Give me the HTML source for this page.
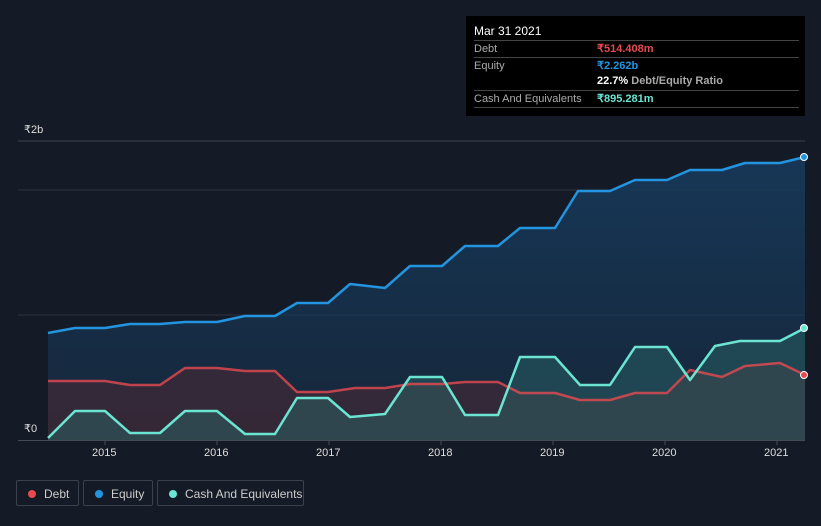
<!DOCTYPE html>
<html><head><meta charset="utf-8"><style>
body{margin:0;width:821px;height:526px;background:#151b26;font-family:"Liberation Sans",sans-serif;overflow:hidden;position:relative}
.tip{position:absolute;left:466px;top:16px;width:339px;height:100px;background:#000;color:#fff;font-size:11px}
.tip .r{position:absolute;left:8px;right:6px;border-top:1px solid #444;height:16px;line-height:16px;color:#aaa}
.tip .v{position:absolute;left:123px;font-weight:bold}
.leg{position:absolute;top:480px;height:26px;border:1px solid #3a414d;border-radius:2px;color:#ccc;font-size:12px;line-height:26px;box-sizing:border-box}
.leg i{position:absolute;left:11px;top:9px;width:8px;height:8px;border-radius:50%}
.leg span{position:absolute;left:27px}
.ax{position:absolute;color:#ddd;font-size:11px}
</style></head><body>
<svg width="821" height="526" style="position:absolute;left:0;top:0">
<defs>
<linearGradient id="ge" x1="0" y1="0" x2="0" y2="1"><stop offset="0" stop-color="#173a5c" stop-opacity=".9"/><stop offset="1" stop-color="#173a5c" stop-opacity=".35"/></linearGradient>
</defs>
<line x1="18" y1="141" x2="805" y2="141" stroke="#3a414d"/>
<line x1="18" y1="190" x2="805" y2="190" stroke="#2a313d"/>
<line x1="18" y1="315" x2="805" y2="315" stroke="#2a313d"/>
<polygon fill="url(#ge)" points="48,333 75,328 105,328 130,324 160,324 185,322 217,322 245,316 275,316 297,303 328,303 350,284 385,288 410,266 442,266 465,246 498,246 520,228 555,228 578,191 610,191 635,180 667,180 690,170 722,170 745,163 780,163 805,157 805,440 48,440"/>
<polygon fill="#4a2a36" fill-opacity=".6" points="48,381 105,381 130,385 160,385 185,368 217,368 245,371 275,371 297,392 328,392 355,388 385,388 410,384 442,384 465,382 498,382 520,393 555,393 580,400 610,400 635,393 667,393 690,370 722,377 745,366 780,363 805,375 805,440 48,440"/>
<polygon fill="#2b6a6a" fill-opacity=".45" points="48,438 75,411 105,411 130,433 160,433 185,411 217,411 245,434 275,434 297,398 328,398 350,417 385,414 410,377 442,377 465,415 498,415 520,357 555,357 580,385 610,385 635,347 667,347 690,380 715,346 740,341 780,341 805,328 805,440 48,440"/>
<g fill="none" stroke-width="2.5" stroke-linejoin="round">
<polyline stroke="#2394df" points="48,333 75,328 105,328 130,324 160,324 185,322 217,322 245,316 275,316 297,303 328,303 350,284 385,288 410,266 442,266 465,246 498,246 520,228 555,228 578,191 610,191 635,180 667,180 690,170 722,170 745,163 780,163 805,157"/>
<polyline stroke="#e64a50" stroke-opacity=".8" points="48,381 105,381 130,385 160,385 185,368 217,368 245,371 275,371 297,392 328,392 355,388 385,388 410,384 442,384 465,382 498,382 520,393 555,393 580,400 610,400 635,393 667,393 690,370 722,377 745,366 780,363 805,375"/>
<polyline stroke="#6ce4d2" points="48,438 75,411 105,411 130,433 160,433 185,411 217,411 245,434 275,434 297,398 328,398 350,417 385,414 410,377 442,377 465,415 498,415 520,357 555,357 580,385 610,385 635,347 667,347 690,380 715,346 740,341 780,341 805,328"/>
</g>
<line x1="18" y1="440.5" x2="805" y2="440.5" stroke="#444b56"/>
<g stroke="#444b56"><line x1="105" y1="440" x2="105" y2="445"/><line x1="217" y1="440" x2="217" y2="445"/><line x1="329" y1="440" x2="329" y2="445"/><line x1="441" y1="440" x2="441" y2="445"/><line x1="553" y1="440" x2="553" y2="445"/><line x1="665" y1="440" x2="665" y2="445"/><line x1="777" y1="440" x2="777" y2="445"/></g>
<circle cx="804" cy="157" r="3.5" fill="#2394df" stroke="#fff"/>
<circle cx="804" cy="375" r="3.5" fill="#e64a50" stroke="#fff"/>
<circle cx="804" cy="328" r="3.5" fill="#6ce4d2" stroke="#fff"/>
</svg>
<div class="ax" style="left:24px;top:123px">₹2b</div>
<div class="ax" style="left:24px;top:422px">₹0</div>
<div class="ax" style="left:92px;top:447px">2015</div>
<div class="ax" style="left:204px;top:447px">2016</div>
<div class="ax" style="left:316px;top:447px">2017</div>
<div class="ax" style="left:428px;top:447px">2018</div>
<div class="ax" style="left:540px;top:447px">2019</div>
<div class="ax" style="left:652px;top:447px">2020</div>
<div class="ax" style="left:764px;top:447px">2021</div>
<div class="tip">
<div style="position:absolute;left:8px;top:8px;font-size:12px">Mar 31 2021</div>
<div class="r" style="top:24px">Debt<span class="v" style="color:#e64a50">₹514.408m</span></div>
<div class="r" style="top:41px">Equity<span class="v" style="color:#2394df">₹2.262b</span></div>
<div class="r" style="top:57px;border:none"><span class="v" style="color:#fff">22.7% <b style="color:#aaa">Debt/Equity Ratio</b></span></div>
<div class="r" style="top:74px;border-bottom:1px solid #444">Cash And Equivalents<span class="v" style="color:#6ce4d2">₹895.281m</span></div>
</div>
<div class="leg" style="left:16px;width:63px"><i style="background:#e64a50"></i><span>Debt</span></div>
<div class="leg" style="left:83px;width:70px"><i style="background:#2394df"></i><span>Equity</span></div>
<div class="leg" style="left:157px;width:147px"><i style="background:#6ce4d2"></i><span>Cash And Equivalents</span></div>
</body></html>
